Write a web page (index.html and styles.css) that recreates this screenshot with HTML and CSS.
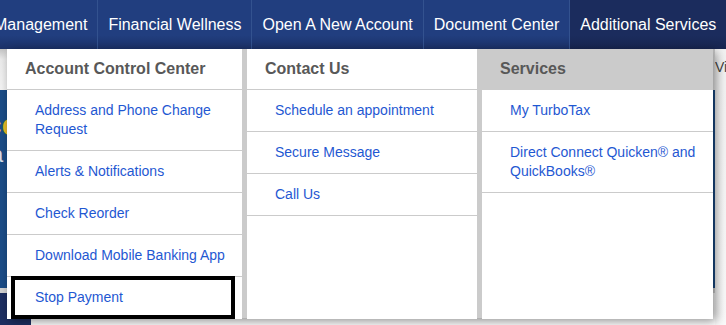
FILE: index.html
```html
<!DOCTYPE html>
<html lang="en">
<head>
  <meta charset="UTF-8" />
  <meta name="viewport" content="width=device-width, initial-scale=1.0"/>
  <title>Additional Services</title>
  <link rel="stylesheet" href="styles.css">
</head>
<body>
  <header class="topnav">
    <ul class="nav-list">
      <li><a href="#">Management</a></li>
      <li><a href="#">Financial Wellness</a></li>
      <li><a href="#">Open A New Account</a></li>
      <li><a href="#">Document Center</a></li>
      <li class="active"><a href="#">Additional Services</a></li>
    </ul>
  </header>

  <main class="page">
    <div class="page-main">
      <div class="banner-top"></div>
      <div class="banner"><span class="banner-title">ce</span><span class="banner-sub">a</span></div>
      <div class="banner-gap"></div>
      <div class="foot-block"></div>
    </div>
    <div class="page-side">Visit Us</div>

    <div class="dropdown">
      <section class="menu-col">
        <h3 class="menu-head">Account Control Center</h3>
        <ul class="menu-links">
          <li><a href="#">Address and Phone Change Request</a></li>
          <li><a href="#">Alerts &amp; Notifications</a></li>
          <li><a href="#">Check Reorder</a></li>
          <li><a href="#">Download Mobile Banking App</a></li>
          <li><a href="#" class="focused">Stop Payment</a></li>
        </ul>
      </section>
      <section class="menu-col">
        <h3 class="menu-head">Contact Us</h3>
        <ul class="menu-links">
          <li><a href="#">Schedule an appointment</a></li>
          <li><a href="#">Secure Message</a></li>
          <li><a href="#">Call Us</a></li>
        </ul>
      </section>
      <section class="menu-col">
        <h3 class="menu-head shaded">Services</h3>
        <ul class="menu-links">
          <li><a href="#">My TurboTax</a></li>
          <li><a href="#">Direct Connect Quicken® and QuickBooks®</a></li>
        </ul>
      </section>
    </div>
  </main>
</body>
</html>
```

FILE: styles.css
```css
body {
  font-family: Arial, 'Liberation Sans', sans-serif;
  margin: 0;
  padding: 0;
  width: 726px;
  height: 325px;
  overflow: hidden;
  background-color: #fff;
}
ul { list-style: none; margin: 0; padding: 0; }
a { text-decoration: none; }

/* top navigation */
.topnav {
  height: 49px;
  background: linear-gradient(#213e7f 0%, #213e7f 72%, #1b3168 100%);
  overflow: hidden;
}
.nav-list {
  display: flex;
  margin-left: -16px;
  white-space: nowrap;
}
.nav-list li { border-right: 1px solid #33528f; }
.nav-list li.active {
  border-right: none;
  flex: 1;
  background: linear-gradient(#1b2c5d 0%, #1b2c5d 72%, #172550 100%);
}
.nav-list a {
  display: block;
  padding: 0 10px;
  line-height: 49px;
  font-size: 16px;
  color: #fff;
}

/* page content behind the menu */
.page {
  position: relative;
  display: grid;
  grid-template-columns: 715px 1fr;
  height: 276px;
}
.page-main { display: flex; flex-direction: column; }
.banner-top {
  height: 41px;
  background: linear-gradient(#c4c4c4 0%, #ececec 25%, #f4f4f4 100%);
}
.banner {
  height: 198px;
  background-color: #1b4d88;
  overflow: hidden;
}
.banner-title {
  display: block;
  margin: 18px 0 0 -15px;
  font-size: 30px;
  font-weight: bold;
  color: #e7b928;
}
.banner-sub {
  display: block;
  margin-left: -9px;
  font-size: 22px;
  color: #d8dde8;
}
.banner-gap { height: 5px; background-color: #d4d4d4; }
.foot-block {
  flex: 1;
  width: 31px;
  background-color: #1d2f62;
}
.page-side {
  padding-top: 10px;
  font-size: 14px;
  line-height: 16px;
  color: #444;
  white-space: nowrap;
  overflow: hidden;
  background: linear-gradient(#f2f2f2, #fafafa);
}

/* dropdown menu */
.dropdown {
  position: absolute;
  top: 0;
  left: 7px;
  width: 706px;
  height: 269px;
  display: grid;
  grid-template-columns: 235px 230px 231px;
  gap: 5px;
  background-color: #cbcbcb;
  box-shadow: 3px 3px 10px rgba(0, 0, 0, 0.45);
}
.menu-col { background-color: #fff; }
.menu-head {
  margin: 0;
  height: 40px;
  line-height: 40px;
  padding-left: 18px;
  font-size: 16px;
  font-weight: bold;
  color: #585858;
  border-bottom: 1px solid #cbcbcb;
}
.menu-head.shaded {
  background-color: #cbcbcb;
  margin-left: -5px;
  padding-left: 23px;
}
.menu-links a {
  display: block;
  padding: 11px 10px 11px 28px;
  line-height: 19px;
  font-size: 14px;
  color: #1f58d2;
  border-bottom: 1px solid #cbcbcb;
}
.menu-links a.focused {
  border: 4px solid #000;
  margin: -1px 7px 0 4px;
  padding: 8px 10px 8px 20px;
  background-color: #fff;
}
```
